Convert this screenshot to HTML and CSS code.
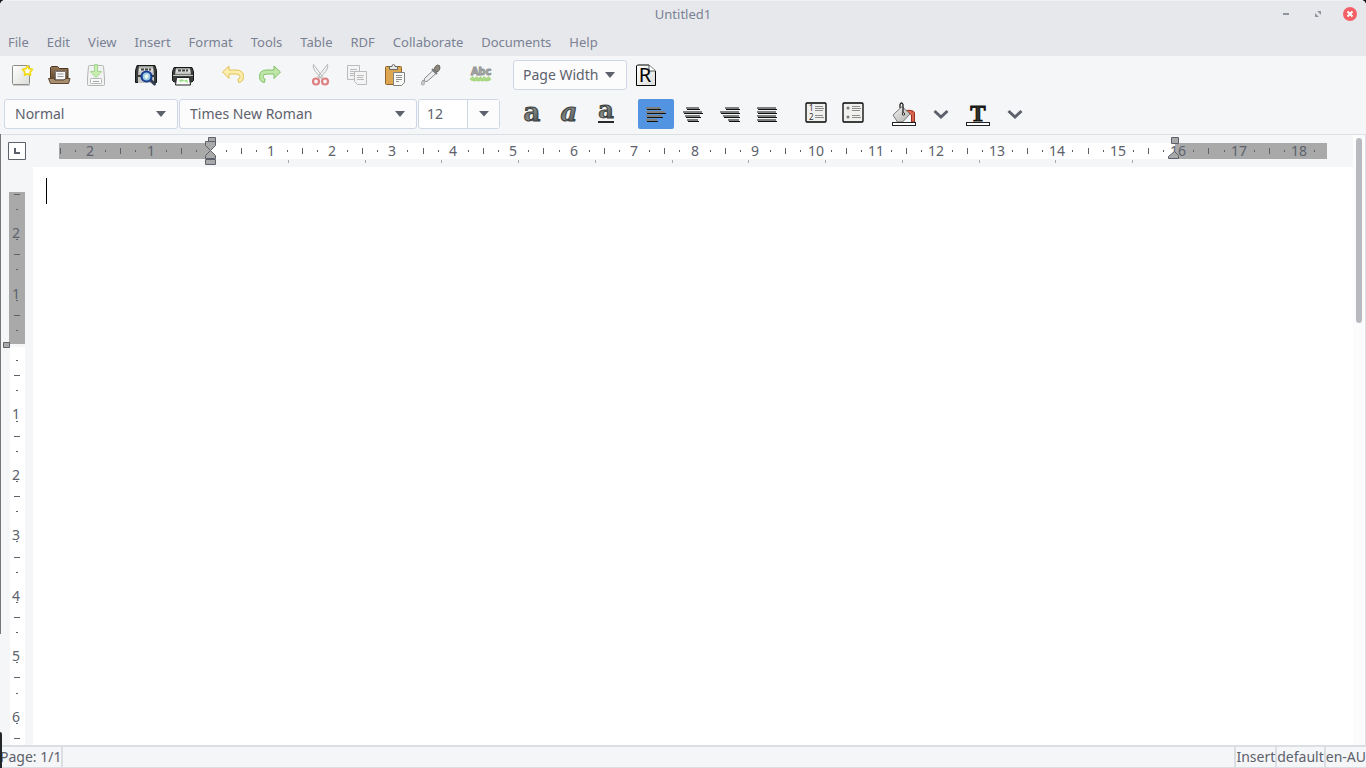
FILE: index.html
```html
<!DOCTYPE html>
<html lang="en">
<head>
<meta charset="utf-8">
<title>Untitled1</title>
<link rel="stylesheet" href="styles.css">
</head>
<body>
<svg class="defs" aria-hidden="true">
  <defs>
    <linearGradient id="paper" x1="0" y1="0" x2="1" y2="1"><stop offset="0" stop-color="#fff"/><stop offset="1" stop-color="#dcdcda"/></linearGradient>
    <linearGradient id="ink" x1="0" y1="0" x2="1" y2="1"><stop offset="0" stop-color="#2c302e"/><stop offset=".5" stop-color="#8a8f8c"/><stop offset="1" stop-color="#262a28"/></linearGradient>
    <linearGradient id="metal" x1="0" y1="0" x2="1" y2="1"><stop offset="0" stop-color="#f4f4f2"/><stop offset="1" stop-color="#b0b2ae"/></linearGradient>
    <linearGradient id="wood" x1="0" y1="0" x2="0" y2="1"><stop offset="0" stop-color="#96795a"/><stop offset="1" stop-color="#65492f"/></linearGradient>
    <linearGradient id="case" x1="0" y1="0" x2="0" y2="1"><stop offset="0" stop-color="#8d908e"/><stop offset=".4" stop-color="#e6e6e4"/><stop offset="1" stop-color="#b4b6b3"/></linearGradient>
  </defs>
</svg>

<header class="header">
  <div class="titlebar">
    <h1 class="title">Untitled1</h1>
    <div class="controls">
      <button class="control" aria-label="Minimize"><svg width="14" height="14" viewBox="0 0 14 14"><path d="M4 6h6v2H4z" fill="#90949e"/></svg></button>
      <button class="control" aria-label="Restore"><svg width="14" height="14" viewBox="0 0 14 14"><path d="M6 4h4v4zM4 6v4h4z" fill="#90949e"/></svg></button>
      <button class="control" aria-label="Close"><svg width="14" height="14" viewBox="0 0 14 14"><circle cx="7" cy="7" r="7" fill="#f46067"/><path d="M4.500 4.500l5 5M9.500 4.500l-5 5" stroke="#fff" stroke-width="2"/></svg></button>
    </div>
  </div>
  <nav class="menubar">
    <button>File</button><button>Edit</button><button>View</button><button>Insert</button><button>Format</button><button>Tools</button><button>Table</button><button>RDF</button><button>Collaborate</button><button>Documents</button><button>Help</button>
  </nav>
</header>

<div class="toolbars">
  <div class="toolbar" role="toolbar" aria-label="Standard">
    <button class="tool" aria-label="New"><svg class="icon" viewBox="0 0 24 24"><rect x="2.500" y="2.500" width="17" height="19" rx="1" fill="url(#paper)" stroke="#8b8d88"/><path d="M3 22.500h17" stroke="#ccc"/><path d="M17.500 3l1.600 2.700 3.300.7-2.200 2.500.3 3.200-3-1.200-3 1.200.3-3.200-2.200-2.500 3.300-.7z" fill="#fffef0" stroke="#f2da18" stroke-width="1.700" stroke-linejoin="round"/></svg></button>
    <button class="tool" aria-label="Open"><svg class="icon" viewBox="0 0 24 24"><path d="M3.500 16V4.500l1-1h6l2 2h8.500V16z" fill="url(#wood)" stroke="#4c3722"/><path d="M8.500 17V8.500h10V17z" fill="#f7f7f7" stroke="#777"/><path d="M10.500 11h6M10.500 13.500h6" stroke="#999"/><path d="M1.500 15.500h5l1.500 1.500h9l1.500-1.500h4.500l-1.500 5h-18z" fill="#a88f72" stroke="#5e452d" stroke-linejoin="round"/></svg></button>
    <button class="tool" aria-label="Save"><svg class="icon faded" viewBox="0 0 24 24"><path d="M3.500 15L4.500 3.500q0-1 1-1h13q1 0 1 1L20.500 15v6.500q0 1-1 1h-15q-1 0-1-1z" fill="#ededeb" stroke="#777"/><rect x="6.500" y="15.500" width="11" height="5" rx="1" fill="#fff" stroke="#777"/><path d="M9 18.500h6" stroke="#555"/><path d="M10.500 1.500h3v7h4l-5.500 6-5.500-6h4z" fill="#9bea67" stroke="#52b52b"/></svg></button>
    <button class="tool split" aria-label="Print Preview"><svg class="icon" viewBox="0 0 24 24"><path d="M3 2.500h18l1.500 5v12h-21v-12z" fill="#3a3e3c" stroke="#151716"/><path d="M5 3h14l1 9H4z" fill="url(#case)"/><path d="M7 6.500h10" stroke="#444" stroke-width="2" stroke-dasharray="3 1"/><rect x="4" y="14" width="16" height="6" fill="#c6c8c5"/><path d="M16.500 17l4 4" stroke="#303c50" stroke-width="3" stroke-linecap="round"/><circle cx="12.500" cy="13.500" r="5" fill="#9ccbe4" stroke="#183f91" stroke-width="2.200"/><path d="M10.500 12.500l3-1.500 1 2-1.500 3-2-1z" fill="#eef9ec"/></svg></button>
    <button class="tool" aria-label="Print"><svg class="icon" viewBox="0 0 24 24"><path d="M3 4.500h18l1.500 4v9l-1.500 1.500H3l-1.500-1.500v-9z" fill="#3a3e3c" stroke="#151716"/><path d="M5 5h14l1 6.500H4z" fill="url(#case)"/><path d="M7 7.500h10" stroke="#444" stroke-width="2" stroke-dasharray="3 1"/><path d="M2 12.500h20" stroke="#c6c8c5"/><path d="M5.500 14.500h13l1 7.500h-15z" fill="#fafbf9" stroke="#1c201e"/><path d="M8 17l3-1 2 1.500 3-1 1 3.500-4-2-4 1z" fill="#9be189"/></svg></button>
    <button class="tool split" aria-label="Undo"><svg class="icon" viewBox="0 0 24 24"><path d="M1.500 9L8 3v4h7q7.500 0 7.500 6.500 0 5.500-5 6l-.5-3.500q2-.5 2-2.500 0-2.500-4-2.500H8v4.500z" fill="#fbedab" stroke="#e3c256" stroke-linejoin="round"/></svg></button>
    <button class="tool" aria-label="Redo"><svg class="icon" viewBox="0 0 24 24"><path d="M22.500 9L16 3v4H9q-7.500 0-7.500 6.500 0 5.500 5 6l.5-3.500q-2-.5-2-2.500 0-2.500 4-2.500h7v4.500z" fill="#c0e6a8" stroke="#7fc268" stroke-linejoin="round"/></svg></button>
    <button class="tool split" aria-label="Cut"><svg class="icon" viewBox="0 0 24 24"><path d="M5.500 1.500q-1.500 4 4.500 10l3 4 1.500-2zM19.500 1.500q1.500 4-4.500 10l-4 4-1-2z" fill="#f4f4f4" stroke="#b3b5b5"/><ellipse cx="8" cy="18.500" rx="3" ry="3" fill="none" stroke="#df8080" stroke-width="2.200"/><ellipse cx="17" cy="18.500" rx="3" ry="3" fill="none" stroke="#df8080" stroke-width="2.200"/></svg></button>
    <button class="tool" aria-label="Copy"><svg class="icon" viewBox="0 0 24 24"><g fill="#f4f4f4" stroke="#b9bbbc"><path d="M2.500 2.500h12v14h-12z"/><path d="M5 6.500h7M5 8.500h6M5 10.500h7M5 12.500h4"/><path d="M9.500 8.500h12v13h-9l-3-3z"/><path d="M12 12.500h7M12 14.500h6M12 16.500h7"/></g></svg></button>
    <button class="tool" aria-label="Paste"><svg class="icon" viewBox="0 0 24 24"><rect x="3.500" y="3.500" width="16" height="18" rx="1" fill="#dda651" stroke="#8e632b"/><path d="M7.500 6.500v-3h2.500q0-2 1.500-2t1.500 2h2.500v3z" fill="#e8e8e6" stroke="#666"/><path d="M11.500 9.500h11v10l-3 3h-8z" fill="#f9f9f8" stroke="#808280"/><path d="M14 12.500h6M14 14.500h6M14 16.500h6M14 18.500h3" stroke="#929492"/></svg></button>
    <button class="tool" aria-label="Format Painter"><svg class="icon" viewBox="0 0 24 24"><path d="M14 7.500l3 3-9 8q-2 0-2.500-.5t0-2.500z" fill="#eceeef" stroke="#85898b"/><path d="M13 6l5 5" stroke="#75797a" stroke-width="2"/><path d="M15 6.500q1-4 3.500-4.500t2.500 3q-.5 3-3 4z" fill="#8a857d" stroke="#6b665c"/><path d="M4 17q-3 4.500-.5 5t1.500-4z" fill="#d2d6d8" stroke="#9b9fa1"/></svg></button>
    <button class="tool split" aria-label="Spelling"><svg class="icon" viewBox="0 0 24 24"><text class="abc" x="12" y="12" text-anchor="middle">Abc</text><path d="M1.500 17l2-2 2 2 2-2 2 2 2-2 2 2 2-2 2 2 2-2 2 2" fill="none" stroke="#a9d985" stroke-width="3"/></svg></button>
    <span class="combo zoom split"><select aria-label="Zoom"><option>Page Width</option></select></span>
    <button class="tool" aria-label="RDF anchor"><svg class="icon" viewBox="0 0 24 24"><path d="M2.500 3l1-1H15l6.500 6v14.500h-19z" fill="url(#paper)" stroke="#000"/><path d="M15 2v6h6.500" fill="#fff" stroke="#555"/><text class="letter-r" x="11" y="19" text-anchor="middle">R</text></svg></button>
  </div>

  <div class="toolbar" role="toolbar" aria-label="Formatting">
    <span class="combo style"><select aria-label="Style"><option>Normal</option></select></span>
    <span class="combo family"><select aria-label="Font"><option>Times New Roman</option></select></span>
    <span class="size"><input type="text" value="12" aria-label="Font size"><button aria-label="Choose font size"><svg width="10" height="6" viewBox="0 0 10 6"><path d="M0 0h10L5 5.500z" fill="#5c616c"/></svg></button></span>
    <button class="tool split" aria-label="Bold"><svg class="icon" viewBox="0 0 24 24"><text class="glyph" x="12" y="19" text-anchor="middle">a</text></svg></button>
    <button class="tool" aria-label="Italic"><svg class="icon" viewBox="0 0 24 24"><text class="glyph slant" x="12" y="19" text-anchor="middle">a</text></svg></button>
    <button class="tool" aria-label="Underline"><svg class="icon" viewBox="0 0 24 24"><text class="glyph light" x="12" y="16" text-anchor="middle">a</text><path d="M4 20h16" stroke="#262a28" stroke-width="2"/></svg></button>
    <button class="tool split active" aria-label="Align left" aria-pressed="true"><svg class="icon" viewBox="0 0 24 24"><g fill="#7d807e"><path d="M2 5h14v2H2zM2 9h19v2H2zM2 13h16v2H2zM2 17h11v2H2z"/><path d="M3 7.500h14M3 11.500h19M3 15.500h16M3 19.500h11" stroke="#111"/></g></svg></button>
    <button class="tool" aria-label="Align center"><svg class="icon" viewBox="0 0 24 24"><g fill="#7d807e"><path d="M5 5h13v2H5zM2 9h19v2H2zM4 13h15v2H4zM6 17h11v2H6z"/><path d="M6 7.500h13M3 11.500h19M5 15.500h15M7 19.500h11" stroke="#111"/></g></svg></button>
    <button class="tool" aria-label="Align right"><svg class="icon" viewBox="0 0 24 24"><g fill="#7d807e"><path d="M7 5h14v2H7zM2 9h19v2H2zM5 13h16v2H5zM10 17h11v2H10z"/><path d="M8 7.500h14M3 11.500h19M6 15.500h16M11 19.500h11" stroke="#111"/></g></svg></button>
    <button class="tool" aria-label="Justify"><svg class="icon" viewBox="0 0 24 24"><g fill="#7d807e"><path d="M2 5h19v2H2zM2 9h19v2H2zM2 13h19v2H2zM2 17h19v2H2z"/><path d="M3 7.500h19M3 11.500h19M3 15.500h19M3 19.500h19" stroke="#111"/></g></svg></button>
    <button class="tool split" aria-label="Numbered list"><svg class="icon" viewBox="0 0 24 24"><rect x="1" y="1" width="20" height="19" rx="1" fill="#f0f0ef" stroke="#000" stroke-width="1.300"/><text class="digit" x="4" y="9">1</text><text class="digit" x="4" y="18">2</text><path d="M10 4.500h8M10 6.500h9M10 8.500h8M10 13.500h8M10 15.500h9" stroke="#8b8e8c"/></svg></button>
    <button class="tool" aria-label="Bulleted list"><svg class="icon" viewBox="0 0 24 24"><rect x="1" y="1" width="20" height="19" rx="1" fill="#f0f0ef" stroke="#000" stroke-width="1.300"/><circle cx="6" cy="6" r="1.500" fill="#777"/><circle cx="6" cy="15" r="1.500" fill="#777"/><path d="M10 4.500h8M10 6.500h9M10 8.500h8M10 13.500h8M10 15.500h9" stroke="#8b8e8c"/></svg></button>
    <button class="tool split" aria-label="Highlight colour"><svg class="icon" viewBox="0 0 24 24"><path d="M13 8.500q9-1 9.500 2.500v9h-3v-7q-1-2-5-2z" fill="#d9644c" stroke="#98301f"/><path d="M1 13l9-8.500 8 7.500-7.500 8H5.500z" fill="url(#metal)" stroke="#777"/><path d="M8 6V2.500Q9.500-.5 11 2.500V11" fill="none" stroke="#222" stroke-width="1.300"/><circle cx="11.500" cy="12" r="1.200" fill="#fff" stroke="#222"/><rect x=".5" y="20.500" width="23" height="3" fill="#fff" stroke="#222"/></svg></button>
    <button class="tool" aria-label="Highlight options"><svg class="icon" viewBox="0 0 24 24"><path d="M5.500 9l6.500 6 6.500-6" fill="none" stroke="#5c616c" stroke-width="3"/></svg></button>
    <button class="tool" aria-label="Text colour"><svg class="icon" viewBox="0 0 24 24"><text class="letter-t" x="12" y="19" text-anchor="middle">T</text><rect x=".5" y="20.500" width="23" height="3" fill="#fff" stroke="#222"/></svg></button>
    <button class="tool" aria-label="Text colour options"><svg class="icon" viewBox="0 0 24 24"><path d="M5.500 9l6.500 6 6.500-6" fill="none" stroke="#5c616c" stroke-width="3"/></svg></button>
  </div>
</div>

<main class="workspace">
  <button class="tab-kind" aria-label="Tab type"><svg width="18" height="18" viewBox="0 0 18 18"><path d="M.5.5h17v17H.5z" fill="#fff" stroke="#5c616c"/><path d="M7 6v5h5" fill="none" stroke="#5c616c" stroke-width="2"/></svg></button>
  <svg class="ruler-h" id="ruler-h" aria-label="Horizontal ruler"></svg>
  <svg class="ruler-v" id="ruler-v" aria-label="Vertical ruler"></svg>
  <div class="page" role="textbox" aria-label="Document"><span class="caret"></span></div>
  <div class="scrollbar"><div class="thumb"></div></div>
</main>

<footer class="statusbar">
  <span>Page: 1/1</span><span class="message"></span><span>Insert</span><span>default</span><span>en-AU</span>
</footer>
<div class="edge" aria-hidden="true"></div>
<div class="edge-corner" aria-hidden="true"></div>
<script src="ruler.js"></script>
</body>
</html>
```
FILE: styles.css
```css
* { box-sizing: border-box; }

html { background: #111; }

body {
  margin: 0;
  height: 100vh;
  display: flex;
  flex-direction: column;
  overflow: hidden;
  position: relative;
  border-radius: 5px 5px 0 0;
  background: #f5f6f7;
  color: #5c616c;
  font: 13px/20px "Noto Sans", sans-serif;
}

button, select, input {
  margin: 0;
  padding: 0;
  border: 0;
  background: none;
  color: inherit;
  font: inherit;
}

.defs { position: absolute; width: 0; height: 0; }

.header {
  border-top: 1px solid #eff0f2;
  border-radius: 5px 5px 0 0;
  background: #e7e8eb;
  color: #7a8194;
}

.titlebar {
  display: grid;
  grid-template-columns: 1fr auto 1fr;
  align-items: center;
  height: 26px;
}
.title { grid-column: 2; margin: 0; font-size: 13px; font-weight: 400; }
.controls { display: flex; justify-content: flex-end; gap: 18px; padding-right: 9px; }
.control { display: flex; }

.menubar { display: flex; gap: 18px; height: 29px; padding-left: 8px; }

.toolbars { border-bottom: 1px solid #dcdfe3; }
.toolbar {
  display: flex;
  align-items: flex-start;
  gap: 1px;
  height: 39px;
  padding: 4px 0 0 4px;
}

.tool {
  display: flex;
  flex: none;
  align-items: center;
  justify-content: center;
  width: 36px;
  height: 30px;
  border-radius: 2px;
}
.split { margin-left: 13px; }
.active { background: #5294e2; }
.icon { width: 24px; height: 24px; overflow: visible; }
.faded { opacity: .5; }

.combo {
  display: grid;
  align-items: center;
  height: 30px;
  border: 1px solid #cfd6e6;
  border-radius: 3px;
  background: #fcfcfd;
  font-size: 14px;
}
.combo select {
  grid-area: 1 / 1;
  appearance: none;
  height: 28px;
  padding-left: 10px;
}
.combo::after {
  content: "";
  grid-area: 1 / 1;
  justify-self: end;
  width: 10px;
  height: 6px;
  margin-right: 11px;
  background: #5c616c;
  clip-path: polygon(0 0, 100% 0, 50% 100%);
  pointer-events: none;
}
.zoom { width: 114px; }
.zoom select { padding-left: 9px; }
.style { width: 174px; }
.family { width: 238px; }

.size {
  display: flex;
  width: 82px;
  height: 30px;
  border: 1px solid #cfd6e6;
  border-radius: 3px;
  background: #fff;
  font-size: 14px;
}
.size input { width: 48px; padding-left: 8px; }
.size button {
  display: flex;
  flex: 1;
  align-items: center;
  justify-content: center;
  border-left: 1px solid #cfd6e6;
  background: #fcfcfd;
}

.abc { font: 700 11px "Noto Sans", sans-serif; fill: #bcbebd; stroke: #8f9291; stroke-width: 1px; }
.letter-r { font: 20px "Noto Sans", sans-serif; fill: #000; }
.glyph { font: 700 26px "DejaVu Serif", serif; fill: url(#ink); stroke: #3c403e; stroke-width: 1px; }
.slant { font-style: italic; }
.light { font-size: 24px; }
.digit { font: 8px "Noto Sans", sans-serif; fill: #333; }
.letter-t { font: 700 23px "Liberation Serif", serif; fill: #30332a; stroke: #111; }

.workspace {
  flex: 1;
  min-height: 0;
  display: grid;
  grid-template-columns: 33px 1fr 13px;
  grid-template-rows: 32px 1fr;
}
.tab-kind { display: flex; padding: 7px 0 0 8px; }
.ruler-h { width: 100%; height: 100%; overflow: hidden; }
.ruler-v { grid-area: 2 / 1; width: 100%; height: 100%; overflow: hidden; }
.ruler-h text, .ruler-v text { font: 14px "Noto Sans", sans-serif; fill: #5c616c; text-anchor: middle; }
.page { grid-area: 2 / 2; padding: 11px 13px; background: #fff; }
.caret { display: block; width: 1px; height: 26px; background: #000; }

.scrollbar {
  grid-area: 1 / 3 / 3 / 4;
  padding: 3px 3px 0;
  border-right: 1px solid #dcdfe3;
  background: #fcfcfc;
}
.thumb { width: 6px; height: 30.5%; border-radius: 3px; background: #b8babf; }

.statusbar {
  display: flex;
  height: 23px;
  border-top: 2px solid #dbdee3;
  border-bottom: 1px solid #dbdee3;
  font-size: 14px;
  white-space: nowrap;
}
.statusbar span { border-right: 2px solid #dbdee3; }
.statusbar span:last-child { border-right: 0; }
.statusbar .message { flex: 1; }

.edge {
  position: absolute;
  inset: 134px auto 134px 0;
  width: 1px;
  background: #777;
}
.edge-corner {
  position: absolute;
  inset: auto auto 0 0;
  width: 2px;
  height: 36px;
  border-top-right-radius: 2px;
  background: #222628;
}
```
FILE: ruler.js
```js
const CM = 60.45;
const SVG = "http://www.w3.org/2000/svg";

function add(parent, name, attrs, text) {
  const node = document.createElementNS(SVG, name);
  for (const key in attrs) node.setAttribute(key, attrs[key]);
  if (text !== undefined) node.textContent = text;
  parent.append(node);
}

function rect(parent, x, y, width, height, fill) {
  add(parent, "rect", { x, y, width, height, fill });
}

const INK = "#5c616c";
const GREY = "#a9a9a9";
const marker = { fill: GREY, stroke: INK };

function drawHorizontal() {
  const h = document.getElementById("ruler-h");
  const zero = 178;
  h.replaceChildren();
  rect(h, 26, 8, 152, 16, GREY);
  rect(h, 178, 8, 964, 16, "#fff");
  rect(h, 1142, 8, 152, 16, GREY);
  for (let q = -10; q <= 73; q++) {
    const x = Math.round(zero + q * CM / 4);
    if (q === 0) continue;
    if (q % 4 === 0) add(h, "text", { x, y: 21 }, Math.abs(q / 4));
    else if (q % 2 === 0) rect(h, x, 13, 1, 6, INK);
    else rect(h, x, 15, 1, 2, INK);
  }
  for (let t = 1; t <= 12; t++) rect(h, Math.round(zero + t * CM * 1.27), 25, 1, 3, GREY);
  add(h, "path", { d: "M175.500 2.500h7v4h-7zM172.500 6.500h10v4l-5 5-5-5zM177.500 15.500l5 5v3h-10v-3zM172.500 24.500h10v5h-10z", ...marker });
  add(h, "path", { d: "M1138.500 2.500h7v6h-7zM1141.500 16.500l4 4v3h-10v-2z", ...marker });
}

function drawVertical() {
  const v = document.getElementById("ruler-v");
  const height = v.getBoundingClientRect().height;
  const zero = 178;
  v.replaceChildren();
  rect(v, 9, 25, 16, 152, GREY);
  rect(v, 10, 180, 15, Math.max(0, height - 180), "#fff");
  for (let q = -10; zero + q * CM / 4 < height - 1; q++) {
    const y = Math.round(zero + q * CM / 4);
    if (q === 0) continue;
    if (q % 4 !== 0) rect(v, q % 2 ? 16 : 14, y, q % 2 ? 2 : 6, 1, INK);
    else if (y + 18 < height) add(v, "text", { x: 16, y: y + 14 }, Math.abs(q / 4));
  }
  add(v, "path", { d: "M3.500 175.500h6v5h-6z", ...marker });
}

drawHorizontal();
drawVertical();
window.addEventListener("resize", drawVertical);
```
